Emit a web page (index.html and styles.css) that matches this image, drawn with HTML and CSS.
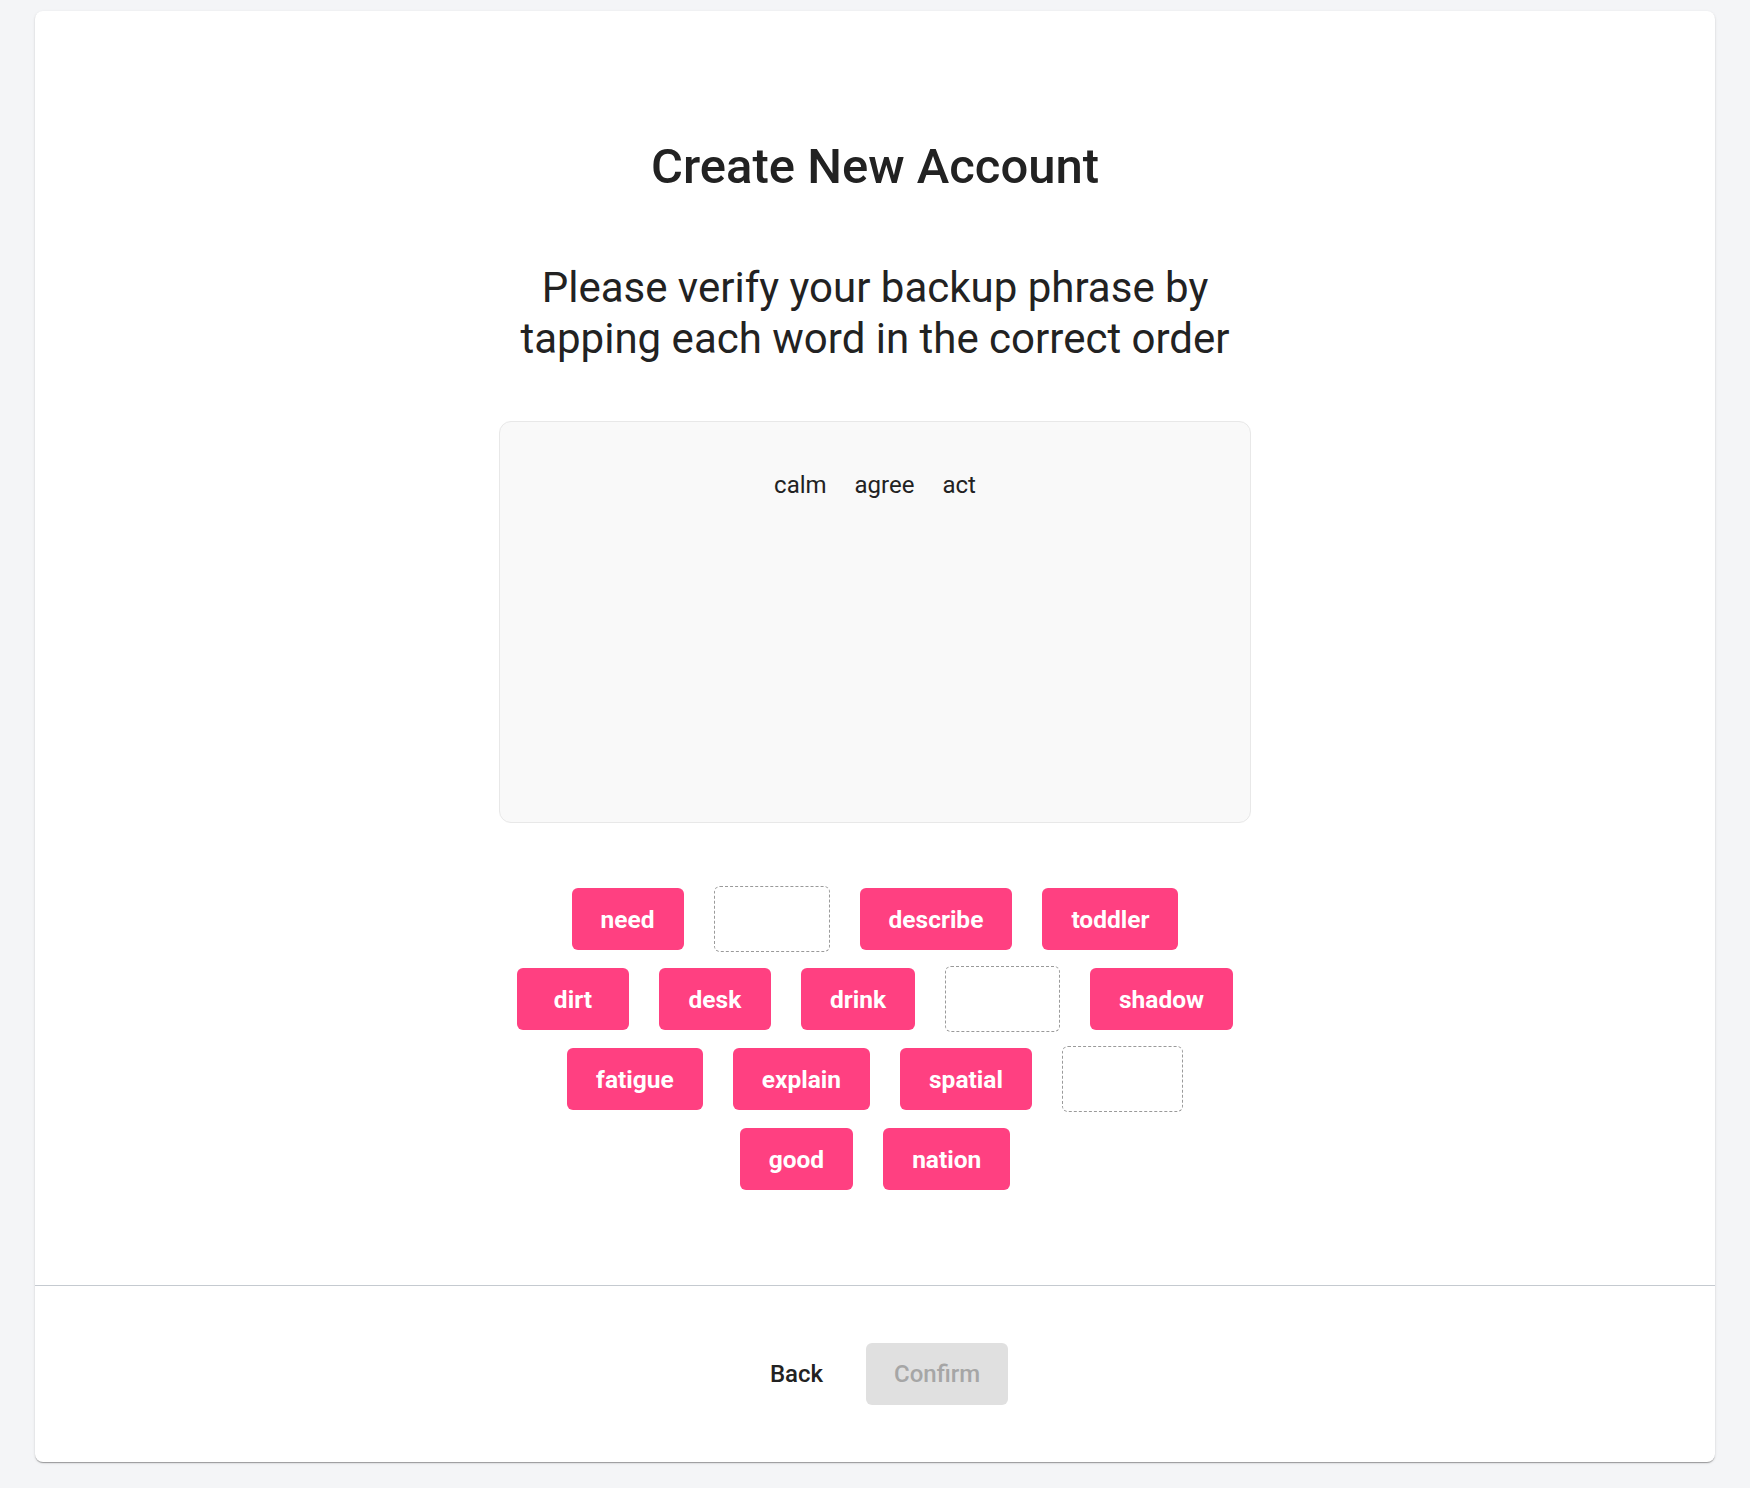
FILE: index.html
```html
<!DOCTYPE html>
<html lang="en">
<head>
<meta charset="utf-8">
<title>Create New Account</title>
<link rel="stylesheet" href="styles.css">
</head>
<body>
<div class="card">
  <div class="main">
    <h1 class="title">Create New Account</h1>
    <p class="subtitle">Please verify your backup phrase by tapping each word in the correct order</p>
    <div class="phrase-box">
      <div class="phrase-words">
        <span class="phrase-word">calm</span>
        <span class="phrase-word">agree</span>
        <span class="phrase-word">act</span>
      </div>
    </div>
    <div class="word-bank">
      <button class="word">need</button>
      <span class="slot slot-1"></span>
      <button class="word">describe</button>
      <button class="word">toddler</button>
      <button class="word">dirt</button>
      <button class="word">desk</button>
      <button class="word">drink</button>
      <span class="slot slot-2"></span>
      <button class="word">shadow</button>
      <button class="word">fatigue</button>
      <button class="word">explain</button>
      <button class="word">spatial</button>
      <span class="slot slot-3"></span>
      <button class="word">good</button>
      <button class="word">nation</button>
    </div>
  </div>
  <div class="footer">
    <button class="btn btn-back">Back</button>
    <button class="btn btn-confirm" disabled>Confirm</button>
  </div>
</div>
</body>
</html>
```

FILE: styles.css
```css
* { box-sizing: border-box; }

html, body {
  margin: 0;
  padding: 0;
}

body {
  background: #f4f5f7;
  font-family: Roboto, "Noto Sans", Arial, sans-serif;
  color: #222222;
  padding-top: 11px;
  height: 1488px;
  overflow: hidden;
}

.card {
  width: 1680px;
  margin: 0 auto;
  background: #ffffff;
  border-radius: 8px;
  box-shadow: 0 2px 1px -1px rgba(0,0,0,0.2), 0 1px 1px 0 rgba(0,0,0,0.14), 0 1px 3px 0 rgba(0,0,0,0.12);
}

.main {
  padding: 127px 0 86px;
  display: flex;
  flex-direction: column;
  align-items: center;
}

.title {
  margin: 0;
  font-size: 49px;
  line-height: 58px;
  font-weight: 500;
  color: #222222;
  text-align: center;
}

.subtitle {
  margin: 66px 0 0;
  width: 752px;
  font-size: 42px;
  line-height: 51px;
  font-weight: 400;
  text-align: center;
  color: #222222;
}

.phrase-box {
  margin-top: 57px;
  width: 752px;
  height: 402px;
  background: #f9f9f9;
  border: 1px solid #e8e8e8;
  border-radius: 12px;
  padding: 49px 20px 20px;
}

.phrase-words {
  display: flex;
  justify-content: center;
  gap: 28px;
}

.phrase-word {
  font-size: 24px;
  line-height: 29px;
  color: #222222;
}

.word-bank {
  margin-top: 56px;
  width: 752px;
  display: flex;
  flex-wrap: wrap;
  justify-content: center;
  align-items: center;
}

.word {
  margin: 9px 15px;
  height: 62px;
  min-width: 112px;
  padding: 0 29px;
  border: none;
  border-radius: 6px;
  background: #ff4081;
  color: #ffffff;
  font-family: Roboto, "Noto Sans", Arial, sans-serif;
  font-size: 24.5px;
  font-weight: 700;
}

.slot {
  margin: 7px 15px;
  height: 66px;
  border: 1px dashed #9a9a9a;
  border-radius: 6px;
}

.slot-1 { width: 116px; }
.slot-2 { width: 115px; }
.slot-3 { width: 121px; }

.footer {
  height: 177px;
  border-top: 1px solid #c5cad0;
  display: flex;
  justify-content: center;
  align-items: center;
  gap: 15px;
}

.btn {
  height: 62px;
  padding: 0 28px;
  border: none;
  border-radius: 6px;
  font-family: Roboto, "Noto Sans", Arial, sans-serif;
  font-size: 24px;
  font-weight: 500;
}

.btn-back {
  background: transparent;
  color: #222222;
}

.btn-confirm {
  background: #e0e0e0;
  color: #a6a6a6;
}
```
